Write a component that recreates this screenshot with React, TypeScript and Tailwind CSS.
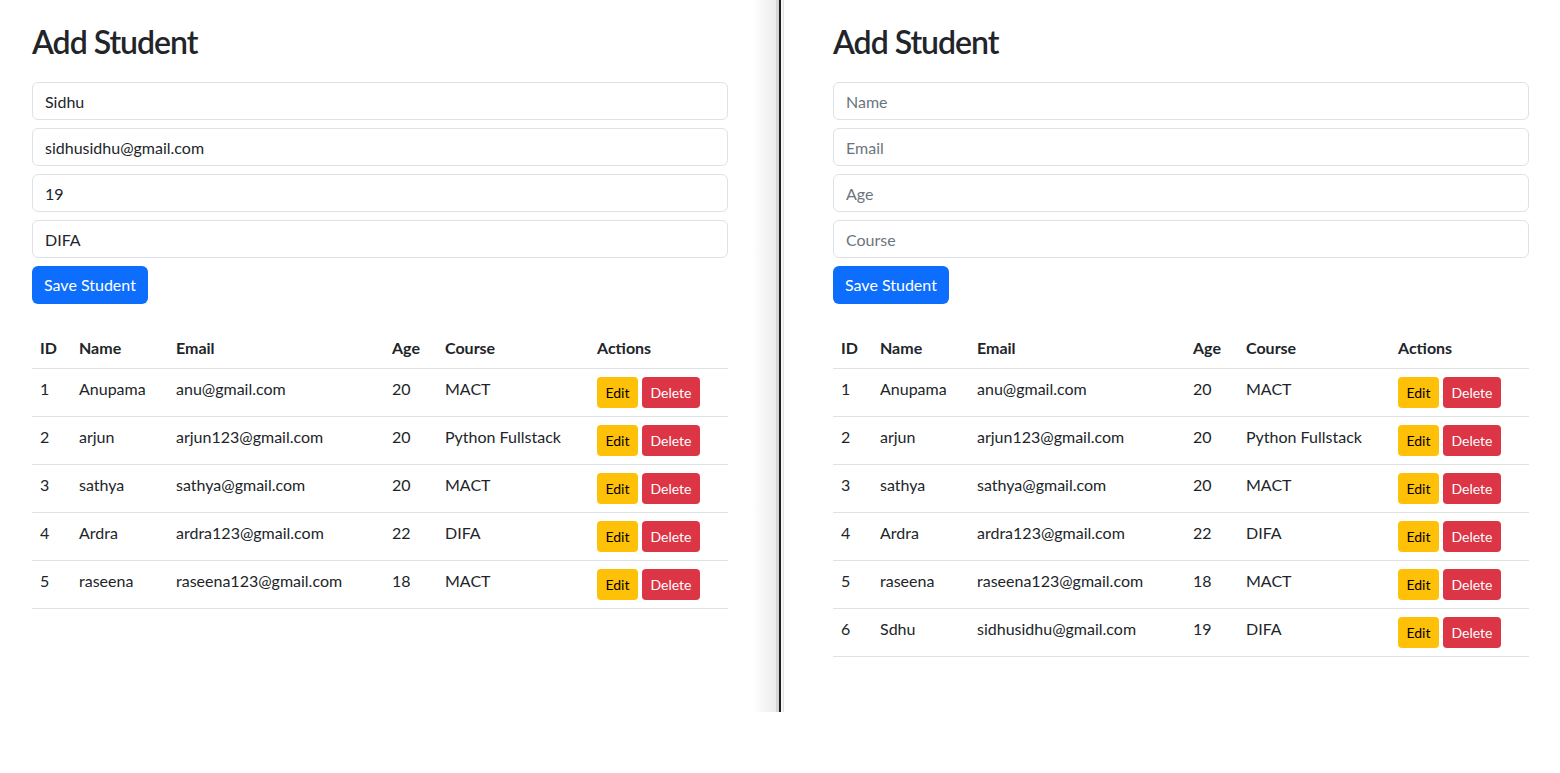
import React from "react";

type Student = {
  id: number;
  name: string;
  email: string;
  age: number;
  course: string;
};

const baseStudents: Student[] = [
  { id: 1, name: "Anupama", email: "anu@gmail.com", age: 20, course: "MACT" },
  { id: 2, name: "arjun", email: "arjun123@gmail.com", age: 20, course: "Python Fullstack" },
  { id: 3, name: "sathya", email: "sathya@gmail.com", age: 20, course: "MACT" },
  { id: 4, name: "Ardra", email: "ardra123@gmail.com", age: 22, course: "DIFA" },
  { id: 5, name: "raseena", email: "raseena123@gmail.com", age: 18, course: "MACT" },
];

const withSidhu: Student[] = [
  ...baseStudents,
  { id: 6, name: "Sdhu", email: "sidhusidhu@gmail.com", age: 19, course: "DIFA" },
];

interface FormValues {
  name: string;
  email: string;
  age: string;
  course: string;
}

function StudentPage({ values, students }: { values: FormValues; students: Student[] }) {
  const fields: { key: keyof FormValues; placeholder: string }[] = [
    { key: "name", placeholder: "Name" },
    { key: "email", placeholder: "Email" },
    { key: "age", placeholder: "Age" },
    { key: "course", placeholder: "Course" },
  ];

  return (
    <div className="w-[696px]">
      <h2 className="text-[32px] leading-[38px] font-semibold tracking-[-1px] text-[#212529] mb-[21px]">Add Student</h2>
      <div className="flex flex-col gap-2">
        {fields.map((f) => (
          <input
            key={f.key}
            type="text"
            placeholder={f.placeholder}
            defaultValue={values[f.key]}
            className="h-[38px] w-full border border-[#dee2e6] rounded-md px-3 text-base text-[#212529] placeholder:text-[#6c757d] outline-none"
          />
        ))}
        <div>
          <button className="h-[38px] px-3 bg-[#0d6efd] text-white text-base rounded-md">Save Student</button>
        </div>
      </div>

      <table className="mt-6 w-full table-fixed border-collapse text-base text-[#212529]">
        <thead>
          <tr className="border-b border-[#dee2e6] text-left">
            <th className="w-[39px] px-2 py-2 leading-6 font-bold">ID</th>
            <th className="w-[97px] px-2 py-2 leading-6 font-bold">Name</th>
            <th className="w-[216px] px-2 py-2 leading-6 font-bold">Email</th>
            <th className="w-[53px] px-2 py-2 leading-6 font-bold">Age</th>
            <th className="w-[152px] px-2 py-2 leading-6 font-bold">Course</th>
            <th className="px-2 py-2 leading-6 font-bold">Actions</th>
          </tr>
        </thead>
        <tbody>
          {students.map((s) => (
            <tr key={s.id} className="border-b border-[#dee2e6] align-top">
              <td className="px-2 py-2 leading-6">{s.id}</td>
              <td className="px-2 py-2 leading-6">{s.name}</td>
              <td className="px-2 py-2 leading-6 whitespace-nowrap">{s.email}</td>
              <td className="px-2 py-2 leading-6">{s.age}</td>
              <td className="px-2 py-2 leading-6 whitespace-nowrap">{s.course}</td>
              <td className="px-2 py-2">
                <div className="flex gap-1">
                  <button className="h-[31px] w-[41px] bg-[#ffc107] text-black text-sm rounded">Edit</button>
                  <button className="h-[31px] w-[58px] bg-[#dc3545] text-white text-sm rounded">Delete</button>
                </div>
              </td>
            </tr>
          ))}
        </tbody>
      </table>
    </div>
  );
}

export default function App() {
  return (
    <div className="w-[1560px] h-[773px] bg-white font-['Lato',sans-serif]">
      <div className="flex h-[712px]">
        <div className="relative w-[776px] pl-8 pt-[23px]">
          <StudentPage values={{ name: "Sidhu", email: "sidhusidhu@gmail.com", age: "19", course: "DIFA" }} students={baseStudents} />
          <div className="absolute right-0 top-0 h-full w-[24px] bg-gradient-to-r from-white to-[#ececec]" />
        </div>
        <div className="flex">
          <div className="w-[3px] bg-[#d6d6d6]" />
          <div className="w-[2px] bg-[#1f1f1f]" />
          <div className="w-[2px] bg-[#f6f6f6]" />
          <div className="w-[1px] bg-[#e2e2e2]" />
        </div>
        <div className="flex-1 pl-[49px] pt-[23px]">
          <StudentPage values={{ name: "", email: "", age: "", course: "" }} students={withSidhu} />
        </div>
      </div>
    </div>
  );
}
